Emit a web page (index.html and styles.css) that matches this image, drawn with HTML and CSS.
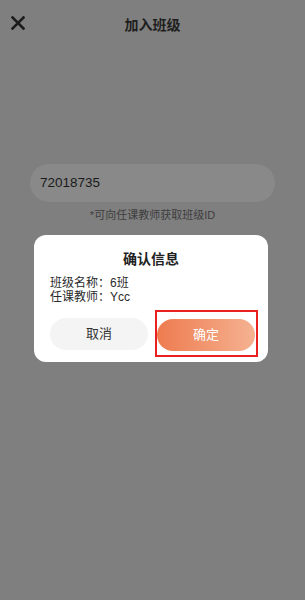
FILE: index.html
```html
<!DOCTYPE html>
<html lang="zh">
<head>
  <meta charset="utf-8">
  <link rel="stylesheet" href="styles.css">
</head>
<body>
  <div class="header">
    <span class="close">
      <svg width="14" height="14" viewBox="0 0 14 14">
        <path d="M1.5 1.5 L12.5 12.5 M12.5 1.5 L1.5 12.5" stroke="#1c1c1c" stroke-width="2.6" stroke-linecap="square"/>
      </svg>
    </span>
    <span class="title">加入班级</span>
  </div>

  <div class="form">
    <div class="input">72018735</div>
    <p class="hint">*可向任课教师获取班级ID</p>
  </div>

  <!-- 确认弹窗 -->
  <div class="mask">
    <div class="dialog">
      <div class="dialog-title">确认信息</div>
      <div class="info">
        <div>班级名称：6班</div>
        <div>任课教师：Ycc</div>
      </div>
      <div class="btns">
        <div class="btn cancel">取消</div>
        <div class="btn-wrap">
          <div class="btn ok">确定</div>
          <span class="mark"></span>
        </div>
      </div>
    </div>
  </div>
</body>
</html>
```

FILE: styles.css
```css
html, body {
  margin: 0;
  padding: 0;
}
body {
  width: 305px;
  height: 600px;
  background-color: #7f7f7f;
  font-family: "Liberation Sans", "Noto Sans CJK SC", sans-serif;
  color: #1c1c1c;
  overflow: hidden;
}
.header {
  height: 48px;
  position: relative;
  display: flex;
  align-items: center;
  justify-content: center;
}
.header .close {
  position: absolute;
  left: 11px;
  top: 16px;
  width: 14px;
  height: 14px;
  display: flex;
}
.header .title {
  font-size: 14px;
  font-weight: bold;
  color: #1e1e1e;
}
.form {
  padding: 116px 30px 0 30px;
}
.input {
  height: 38px;
  line-height: 38px;
  border-radius: 19px;
  background-color: #898989;
  padding-left: 10px;
  font-size: 13.5px;
  color: #1a1a1a;
}
.hint {
  margin: 6px 0 0 0;
  font-size: 11px;
  line-height: 14px;
  text-align: center;
  color: #3e3e3e;
}

.mask {
  position: fixed;
  left: 0;
  top: 0;
  right: 0;
  bottom: 0;
  display: flex;
  justify-content: flex-start;
  align-items: flex-start;
  padding: 235px 0 0 34px;
}
.dialog {
  width: 234px;
  height: 127px;
  box-sizing: border-box;
  background-color: #fff;
  border-radius: 12px;
  padding: 14px 13px 0 16px;
}
.dialog-title {
  font-size: 14px;
  font-weight: bold;
  line-height: 20px;
  text-align: center;
  color: #222;
  padding-right: 3px;
}
.info {
  margin-top: 7px;
  font-size: 12px;
  line-height: 14px;
  color: #2a2a2a;
}
.btns {
  display: flex;
  gap: 9px;
  margin-top: 14px;
}
.btn {
  height: 32px;
  line-height: 32px;
  border-radius: 16px;
  text-align: center;
  font-size: 13px;
}
.cancel {
  flex: 1;
  background-color: #f4f4f4;
  color: #333;
}
.btn-wrap {
  flex: 1;
  position: relative;
  padding-top: 1px;
}
.ok {
  background: linear-gradient(to right, #ee7b4f, #f5b291);
  color: #fff;
}
.mark {
  position: absolute;
  left: -2px;
  right: -3px;
  top: -8px;
  bottom: -6px;
  border: 2px solid #e8201f;
}
```
